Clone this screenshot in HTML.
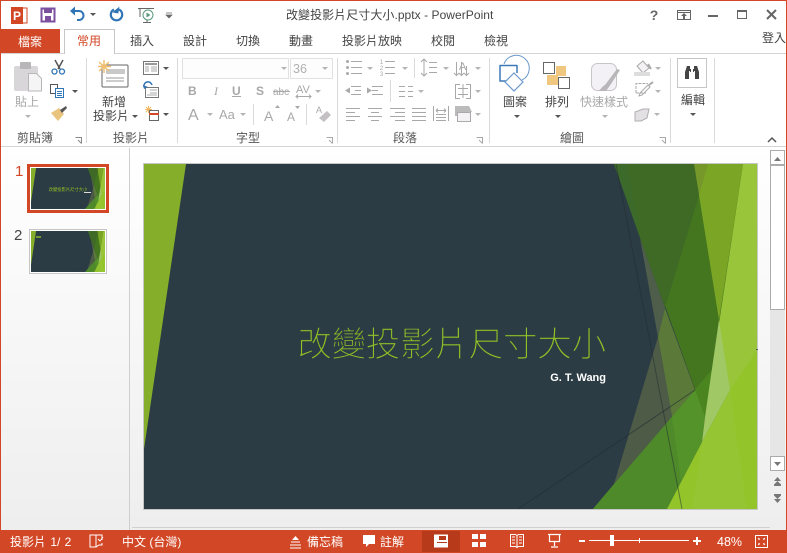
<!DOCTYPE html>
<html><head><meta charset="utf-8"><style>
html,body{margin:0;padding:0;background:#fff;width:787px;height:553px;overflow:hidden}
svg{display:block}
text{font-family:"Liberation Sans","Noto Sans CJK TC",sans-serif;font-size:12px;fill:#444}
.m{text-anchor:middle}
.g{fill:#a8a8a8}
.w{fill:#fff}
.ic{fill:none;stroke:#a8a8a8;stroke-width:1}
</style></head><body>
<svg width="787" height="553" viewBox="0 0 787 553" xmlns="http://www.w3.org/2000/svg">
<defs>
<linearGradient id="bg" x1="0" y1="0" x2="0" y2="1"><stop offset="0" stop-color="#fff"/><stop offset="1" stop-color="#eee"/></linearGradient>
<path id="c" d="M0 0h6l-3 3z" fill="#b5b5b5"/>
<path id="d" d="M0 0h6l-3 3z" fill="#555"/>
<clipPath id="sc"><rect x="144" y="164" width="613" height="345"/></clipPath>
<g id="art" clip-path="url(#sc)">
<rect x="144" y="164" width="613" height="345" fill="#2c3c44"/>
<polygon points="144,164 186,164 144,449" fill="#85ae2a"/>
<!-- right light band -->
<polygon points="694,164 757,164 757,509 747,509" fill="#98c53a"/>
<!-- big mid green triangle -->
<polygon points="614,164 743,164 705,417" fill="#43761f"/>
<polygon points="694,164 743,164 719,320" fill="#7ba525"/>
<polygon points="694,164 708,164 699,195" fill="#76982a"/>
<!-- darker wedge -->
<polygon points="627,164 694,164 699,195 665,308 640,238" fill="#3e6a26"/>
<polygon points="614,164 627,164 640,238" fill="#3c6a2a"/>
<!-- grey wedges -->
<polygon points="640,238 665,308 658,337" fill="#4e5e4a"/>
<polygon points="658,337 665,308 695,390 672,417" fill="#5b7a3a"/>
<polygon points="658,337 672,417 614,484" fill="#4d5b47"/>
<!-- mid bright green -->
<polygon points="593,509 712,370 705,417 702,442 667,509" fill="#54932a"/>
<polygon points="695,390 712,370 705,417" fill="#4a8520"/>
<polygon points="593,509 614,484 672,417 685,509" fill="#4f8a2a"/>
<!-- pale band -->
<polygon points="719,320 730,390 702,442 705,417" fill="#a0c864"/>
<!-- bottom right bright -->
<polygon points="757,350 730,390 702,442 667,509 757,509" fill="#93c52b"/>
<polygon points="702,442 730,390 747,509 692,509" fill="#95c532"/>
<path d="M616 164L682 509" stroke="#222c30" stroke-opacity=".5" fill="none"/>
<path d="M518 509L695 390" stroke="#222c30" stroke-opacity=".6" fill="none"/>
</g>
</defs>

<!-- window -->
<rect x="0" y="0" width="787" height="553" fill="#fff"/>
<rect x="0" y="148" width="787" height="382" fill="url(#bg)"/>
<rect x="0" y="146" width="787" height="1" fill="#d4d4d4"/>
<rect x="0" y="53" width="787" height="1" fill="#d4d4d4"/>

<!-- QAT -->
<rect x="14" y="8" width="13" height="15" fill="#fff" stroke="#d24726"/>
<rect x="11" y="7" width="12" height="17" fill="#d24726"/>
<text x="13" y="20" style="font-size:12px;font-weight:bold;fill:#fff">P</text>
<rect x="41.500" y="8.500" width="13" height="13" fill="#fff" stroke="#7c4f9f" stroke-width="2"/>
<rect x="44" y="8" width="8" height="5" fill="#7c4f9f"/><rect x="45" y="16" width="6" height="6" fill="#7c4f9f"/>
<path d="M74 11h5a4.500 4.500 0 0 1 0 9h-2" fill="none" stroke="#2f74b5" stroke-width="2"/><path d="M75 6.500v9l-5-4.500z" fill="#2f74b5"/>
<use href="#d" x="90" y="13"/>
<path d="M114 9.500a5.700 5.700 0 1 0 5 0" fill="none" stroke="#2f74b5" stroke-width="2.200"/><path d="M119 6v7h-6z" fill="#2f74b5" transform="rotate(10 116 9)"/>
<path d="M138 8.500h16M140 9v8M147 20v3M143 22.500h8" fill="none" stroke="#666"/>
<circle cx="148" cy="15" r="5" fill="#fff" stroke="#5a9a7a"/><path d="M146.500 12.500v5l4-2.500z" fill="#5a9a7a"/>
<path d="M166 13h6M166 15h6l-3 3z" fill="#666" stroke="#666" stroke-width=".7"/>

<!-- title -->
<text x="286" y="19" style="font-size:12px;fill:#444;letter-spacing:.05px">改變投影片尺寸大小.pptx - PowerPoint</text>

<!-- window controls -->
<text x="654" y="20" class="m" style="font-size:14px;font-weight:bold;fill:#666">?</text>
<rect x="677.500" y="10.500" width="13" height="9" fill="none" stroke="#666"/><path d="M677 12.500h14" stroke="#666"/><path d="M684 13l-3 3h2v3h2v-3h2z" fill="#666"/>
<rect x="708" y="15" width="10" height="2" fill="#666"/>
<rect x="737.500" y="10.500" width="9" height="8" fill="none" stroke="#666"/><rect x="737" y="10" width="10" height="2" fill="#666"/>
<path d="M767 10l9 9M776 10l-9 9" stroke="#666" stroke-width="2" fill="none"/>

<!-- tabs -->
<rect x="1" y="29" width="59" height="24" fill="#d24726"/>
<text x="30" y="46" class="m w">檔案</text>
<path d="M64.500 54V29.500h50V54" fill="#fff" stroke="#c6c6c6"/><rect x="65" y="52" width="49" height="3" fill="#fff"/>
<text x="89" y="45" class="m" style="fill:#d24726">常用</text>
<text x="142" y="45" class="m">插入</text>
<text x="195" y="45" class="m">設計</text>
<text x="248" y="45" class="m">切換</text>
<text x="301" y="45" class="m">動畫</text>
<text x="372" y="45" class="m">投影片放映</text>
<text x="443" y="45" class="m">校閱</text>
<text x="496" y="45" class="m">檢視</text>
<text x="762" y="42">登入</text>

<!-- group separators -->
<g fill="#dadada">
<rect x="86" y="58" width="1" height="85"/><rect x="177" y="58" width="1" height="85"/><rect x="337" y="58" width="1" height="85"/><rect x="489" y="58" width="1" height="85"/><rect x="670" y="58" width="1" height="85"/><rect x="714" y="58" width="1" height="85"/>
<rect x="414" y="58" width="1" height="20"/><rect x="390" y="80" width="1" height="22"/><rect x="306" y="104" width="1" height="21"/><rect x="253" y="104" width="1" height="21"/>
</g>

<!-- clipboard -->
<rect x="14" y="66" width="24" height="25" rx="2" fill="#d9d6d9"/><rect x="20" y="62" width="11" height="7" rx="1" fill="#b9b6b9"/>
<path d="M28.500 73.500h8l5 5v12.500h-13z" fill="#f6f5f6" stroke="#b9b6b9"/>
<text x="27" y="106" class="m g">貼上</text>
<use href="#c" x="25" y="115"/>
<path d="M55 60l5 9M63 60l-5 9" stroke="#555" stroke-width="1.500" fill="none"/>
<circle cx="54.500" cy="71.500" r="2.500" fill="none" stroke="#2f74b5" stroke-width="1.300"/><circle cx="62" cy="71.500" r="2.500" fill="none" stroke="#2f74b5" stroke-width="1.300"/>
<rect x="50.500" y="84.500" width="7" height="9" fill="#fff" stroke="#555"/><rect x="55.500" y="88.500" width="8" height="9" fill="#fff" stroke="#2f74b5"/><path d="M57 91.500h5M57 93.500h5M57 95.500h5" stroke="#2f74b5"/>
<use href="#d" x="72" y="90"/>
<path d="M51 113l8-5 5 6-6 7z" fill="#e9c47e"/><path d="M60 110l6-4 1 2-5 5z" fill="#555"/>
<text x="35" y="142" class="m" style="fill:#555">剪貼簿</text>
<path d="M75.500 137.500h6v6M78 140l3.500 3.500" fill="none" stroke="#888"/>

<!-- slides -->
<rect x="102" y="65" width="26" height="22" rx="1" fill="#fff" stroke="#666"/><rect x="106" y="69" width="19" height="5" fill="#c9c9c9"/><path d="M106 78h18M106 81h18" stroke="#999"/>
<path d="M99 62l10 9M109 62l-10 9M104 60v13M98 66.500h13" stroke="#f0c070" stroke-width="1.500"/>
<text x="114" y="106" class="m">新增</text>
<text x="93" y="120">投影片</text>
<use href="#d" x="132" y="115"/>
<rect x="143.500" y="61.500" width="15" height="13" fill="#fff" stroke="#777"/><rect x="145" y="63" width="12" height="2" fill="#999"/><path d="M145 67h4M145 69h4M145 71h4M151 67h6M151 69h6M151 71h6" stroke="#aaa"/>
<use href="#d" x="163" y="67"/>
<rect x="145.500" y="87.500" width="13" height="10" fill="#fff" stroke="#777"/><path d="M150 90h7M150 93h7M147 95h10" stroke="#aaa"/><path d="M144 87a4 4 0 0 1 8-2" fill="none" stroke="#2f74b5" stroke-width="1.500"/><path d="M143 85l5 2-4 2z" fill="#2f74b5"/>
<path d="M146 107l5 5M151 107l-5 5M148.500 106v7M145 109.500h7" stroke="#f0b860"/>
<rect x="149.500" y="110.500" width="9" height="10" fill="#fff" stroke="#666"/><rect x="149" y="113" width="10" height="2" fill="#d24726"/>
<use href="#d" x="163" y="113"/>
<text x="131" y="142" class="m" style="fill:#555">投影片</text>

<!-- font -->
<rect x="182.500" y="58.500" width="106" height="20" fill="#fdfdfd" stroke="#e1e1e1"/>
<use href="#c" x="281" y="67"/>
<rect x="290.500" y="58.500" width="42" height="20" fill="#fdfdfd" stroke="#e1e1e1"/>
<text x="293" y="73" style="font-size:12.500px;fill:#b0b0b0">36</text>
<use href="#c" x="322" y="67"/>
<text x="188" y="95" style="font-size:12px;font-weight:bold;fill:#a8a8a8">B</text>
<text x="214" y="95" style="font-size:12px;font-style:italic;fill:#a8a8a8;font-family:'Liberation Serif',serif">I</text>
<text x="232" y="95" style="font-size:12px;font-weight:bold;fill:#a8a8a8">U</text><rect x="232" y="96" width="9" height="1" fill="#a8a8a8"/>
<text x="256" y="95" style="font-size:12px;font-weight:bold;fill:#a8a8a8">S</text>
<text x="273" y="95" style="font-size:10px;fill:#a8a8a8">abc</text><rect x="273" y="91" width="17" height="1" fill="#a8a8a8"/>
<text x="296" y="93" style="font-size:11px;fill:#a8a8a8">AV</text><path d="M296 96.500h15M298 94.500l-2 2 2 2M309 94.500l2 2-2 2" class="ic"/>
<use href="#c" x="315" y="90"/>
<text x="188" y="120" style="font-size:16px;fill:#a8a8a8">A</text>
<use href="#c" x="207" y="113"/>
<text x="219" y="119" style="font-size:13px;fill:#a8a8a8">Aa</text>
<use href="#c" x="240" y="113"/>
<text x="264" y="121" style="font-size:14px;fill:#a8a8a8">A</text><path d="M275 108h5l-2.500-3z" fill="#a8a8a8"/>
<text x="287" y="121" style="font-size:12px;fill:#a8a8a8">A</text><path d="M295 106h5l-2.500 3z" fill="#a8a8a8"/>
<text x="316" y="113" style="font-size:9px;fill:#a8a8a8">A</text>
<path d="M319 118l8-7 4 4-7 7z" fill="#c4c0c4"/>
<text x="248" y="142" class="m" style="fill:#555">字型</text>
<path d="M326.500 137.500h6v6M329 140l3.500 3.500" fill="none" stroke="#a8a8a8"/>

<!-- paragraph -->
<g class="ic">
<path d="M351 61.500h11M351 67.500h11M351 73.500h11M385 61.500h10M385 67.500h10M385 73.500h10"/>
<path d="M424 60v15M421 62l3-3 3 3M421 73l3 3 3-3M429 62.500h8M429 67.500h8M429 72.500h8"/>
<path d="M456.500 62v13M461.500 62v13M466.500 66v9M454 73l2.500 2.500 2.500-2.500M459 73l2.500 2.500 2.500-2.500M464 73l2.500 2.500 2.500-2.500"/>
<path d="M351 86.500h10M355 90.500h6M351 94.500h10M372 86.500h11M372 90.500h6M372 94.500h11"/>
<path d="M399 86.500h6M399 91.500h6M399 96.500h6M408 86.500h5M408 91.500h5M408 96.500h5"/>
<path d="M460 84.500h-4.500v14h4.500M466 84.500h4.500v14h-4.500M458 88.500h10M458 94.500h10M463 84v8M463 92v6"/>
<path d="M346 108.500h14M346 112.500h9M346 116.500h14M346 120.500h9"/>
<path d="M368 108.500h14M371 112.500h8M368 116.500h14M371 120.500h8"/>
<path d="M390 108.500h15M395 112.500h10M390 116.500h15M395 120.500h10"/>
<path d="M412 108.500h14M412 112.500h14M412 116.500h14M412 120.500h14"/>
<path d="M433.500 106v15M448.500 106v15M436 110.500h10M436 114.500h10M436 117.500h10M436 120.500h10M436 110.500l2-2M436 110.500l2 2M446 110.500l-2-2M446 110.500l-2 2"/>
</g>
<g fill="#aaa"><circle cx="347.500" cy="61.500" r="1.500"/><circle cx="347.500" cy="67.500" r="1.500"/><circle cx="347.500" cy="73.500" r="1.500"/></g>
<text x="381.500" y="64" class="m" style="font-size:6px;fill:#a8a8a8">1</text><text x="381.500" y="70" class="m" style="font-size:6px;fill:#a8a8a8">2</text><text x="381.500" y="76" class="m" style="font-size:6px;fill:#a8a8a8">3</text>
<text x="459" y="70" style="font-size:11px;fill:#a8a8a8">A</text>
<use href="#c" x="367" y="67"/><use href="#c" x="402" y="67"/><use href="#c" x="443" y="67"/><use href="#c" x="475" y="67"/>
<use href="#c" x="418" y="90"/><use href="#c" x="475" y="90"/><use href="#c" x="475" y="113"/>
<path d="M345 90.500l5-3v6z" fill="#aaa"/><path d="M372 90.500l-5-3v6z" fill="#aaa"/>
<path d="M455 106h14l3 6h-7l-4 4h-6z" fill="#bbb"/>
<rect x="457.500" y="112.500" width="13" height="9" fill="#f4f2f4" stroke="#aaa"/>
<text x="405" y="142" class="m" style="fill:#555">段落</text>
<path d="M476.500 137.500h6v6M479 140l3.500 3.500" fill="none" stroke="#a8a8a8"/>

<!-- drawing -->
<path d="M504 64a13 13 0 1 1 18 16" fill="none" stroke="#6a99cb" stroke-width="1"/>
<path d="M500 65.500h17M500 65v16h7" fill="none" stroke="#3f7ab8" stroke-width="1.500"/>
<path d="M517 65v8" stroke="#3f7ab8" stroke-width="1.500"/>
<path d="M514 73l9 9-9 9-9-9z" fill="#fff" stroke="#6a99cb" stroke-width="1.200"/>
<text x="515" y="106" class="m">圖案</text>
<use href="#d" x="514" y="115"/>
<rect x="556" y="66" width="10" height="10" fill="#efc77f"/><rect x="547" y="75" width="11" height="10" fill="#efc77f"/>
<rect x="543.500" y="62.500" width="11" height="11" fill="#fff" stroke="#666"/><rect x="558.500" y="77.500" width="11" height="11" fill="#fff" stroke="#666"/>
<text x="557" y="106" class="m">排列</text>
<use href="#d" x="555" y="115"/>
<rect x="591.500" y="63.500" width="25" height="27" rx="6" fill="#f3f1f5" stroke="#c8c5c9"/>
<path d="M620 70l-9 14-5 7h-8c3-1 4-5 7-6l12-16z" fill="#b9b6b9"/>
<text x="604" y="106" class="m g">快速樣式</text>
<use href="#c" x="602" y="115"/>
<path d="M637 66l6-5 6 7-6 5z" fill="#f3f1f5" stroke="#aaa"/><rect x="634" y="72" width="16" height="4" fill="#ddd"/>
<path d="M648 64l3 5" stroke="#aaa" stroke-width="2"/>
<use href="#c" x="655" y="67"/>
<path d="M636 93v-9.500h12M636 93h10" class="ic" stroke-dasharray="3 1"/>
<path d="M640 93l8-8 2 2-8 8-3 1z" class="ic"/><path d="M649 85l4-3" stroke="#aaa" stroke-width="2"/>
<use href="#c" x="655" y="90"/>
<path d="M635 112l8-3h6l-2 9-6 3h-6z" fill="#e3e0e3" stroke="#b0adb0"/>
<use href="#c" x="654" y="113"/>
<text x="572" y="142" class="m" style="fill:#555">繪圖</text>
<path d="M659.500 137.500h6v6M662 140l3.500 3.500" fill="none" stroke="#a8a8a8"/>

<!-- editing -->
<rect x="677.500" y="58.500" width="29" height="29" fill="#fff" stroke="#c6c6c6"/>
<path d="M687 66h3v3h1v3h-1v-1h-1v8h-4v-3zM697 66h-3v3h-1v3h1v-1h1v8h4v-3z" fill="#444"/>
<path d="M687 66l-2 6v7h4V67zM697 66l2 6v7h-4V67z" fill="#444"/>
<text x="693" y="104" class="m">編輯</text>
<use href="#d" x="690" y="113"/>
<path d="M768 142l4-4 4 4" fill="none" stroke="#555" stroke-width="1.500"/>

<!-- thumbs panel -->
<rect x="129" y="148" width="1" height="382" fill="#cfcfcf"/>
<text x="15" y="176" style="font-size:15px;fill:#d24726">1</text>
<text x="14" y="240" style="font-size:15px;fill:#444">2</text>
<rect x="28.500" y="165.500" width="79" height="46" fill="#fff" stroke="#d24726" stroke-width="3"/>
<g transform="translate(31 168) scale(.1207 .1188) translate(-144 -164)"><use href="#art"/></g>
<text x="68" y="191" class="m" style="font-size:4.300px;fill:#90c226">改變投影片尺寸大小</text>
<rect x="84" y="192" width="7" height="1" fill="#ddd"/>
<rect x="29.500" y="229.500" width="77" height="44" fill="#fff" stroke="#c6c6c6"/>
<g transform="translate(31 231) scale(.1207 .1188) translate(-144 -164)"><use href="#art"/></g>
<rect x="36" y="236" width="5" height="2" fill="#6f9a2e"/>

<!-- main slide -->
<rect x="143.500" y="163.500" width="614" height="346" fill="none" stroke="#c6c6c6"/>
<use href="#art"/>
<text x="606" y="356" text-anchor="end" style="font-size:34.300px;font-weight:300;fill:#90c226;stroke:#2c3c44;stroke-width:.5px;font-family:'Noto Sans CJK TC',sans-serif">改變投影片尺寸大小</text>
<text x="606" y="381" text-anchor="end" style="font-size:11px;font-weight:bold;fill:#fff">G. T. Wang</text>
<rect x="756" y="349" width="2" height="1" fill="#555"/>
<rect x="132" y="527" width="638" height="1" fill="#d0d0d0"/>

<!-- scrollbar -->
<rect x="770" y="150" width="15" height="306" fill="#e6e6e6"/>
<rect x="770.500" y="150.500" width="14" height="14" fill="#fff" stroke="#ababab"/>
<path d="M774 161h7l-3.500-4z" fill="#777"/>
<rect x="770.500" y="165.500" width="14" height="144" fill="#fff" stroke="#ababab"/>
<rect x="770.500" y="456.500" width="14" height="14" fill="#fff" stroke="#ababab"/>
<path d="M774 462h7l-3.500 4z" fill="#777"/>
<path d="M774 481h7l-3.500-4zM774 486h7v-1.500h-7zM774 484.500h7l-3.500-3.500z" fill="#777"/>
<path d="M774 494h7v1.500h-7zM774 495.500h7l-3.500 3.500zM774 499h7l-3.500 4z" fill="#777"/>

<!-- status bar -->
<rect x="0" y="530" width="787" height="23" fill="#d24726"/>
<text x="10" y="546" class="w" style="word-spacing:1px">投影片 1/ 2</text>
<path d="M90 535h6v12h-6zM96 535h6v5M96 547l3-2h3v-2" fill="none" stroke="#fff"/><path d="M98 539l2 2 3-4" fill="none" stroke="#fff"/>
<text x="122" y="546" class="w">中文 (台灣)</text>
<path d="M291 542h9M290 545h11M290 548h11" stroke="#fff"/><path d="M292 540l3.500-4 3.500 4z" fill="#fff"/>
<text x="307" y="546" class="w">備忘稿</text>
<path d="M363 535h12v9h-6l-3 3v-3h-3z" fill="#fff"/>
<text x="380" y="546" class="w">註解</text>
<rect x="422" y="531" width="38" height="21" fill="#b73a1b"/>
<path d="M434 534.500h14v13h-14z" fill="#fff"/><rect x="439" y="536" width="7" height="4" fill="#b73a1b"/><rect x="437" y="542" width="10" height="1" fill="#b73a1b"/>
<g fill="#fff"><rect x="472" y="534" width="6" height="5"/><rect x="480" y="534" width="6" height="5"/><rect x="472" y="542" width="6" height="5"/><rect x="480" y="542" width="6" height="5"/></g>
<path d="M510.500 534.500h5l1.500 1 1.500-1h5v12h-5l-1.500 1-1.500-1h-5zM517 536v11M512 537h3M512 540h3M512 543h3M519 537h3M519 540h3M519 543h3" fill="none" stroke="#fff"/>
<path d="M548 534.500h13M549.500 535v6.500h10v-6.500M554.500 542v4M551 547h7" fill="none" stroke="#fff" stroke-width="1.200"/>
<rect x="579" y="540" width="6" height="2" fill="#fff"/>
<rect x="589" y="540" width="100" height="1" fill="#fff"/>
<rect x="610" y="535" width="4" height="11" fill="#fff"/>
<rect x="639" y="538" width="1" height="5" fill="#fff"/>
<path d="M693 540h8v2h-8zM696 537h2v8h-2z" fill="#fff"/>
<text x="717" y="546" class="w" style="font-size:12.500px">48%</text>
<rect x="755.500" y="535.500" width="12" height="12" fill="none" stroke="#fff"/>
<path d="M758 538l2 1-1 1zM765 538l-2 1 1 1zM758 545l2-1-1-1zM765 545l-2-1 1-1z" fill="#fff" stroke="#fff" stroke-width=".5"/>

<!-- window border -->
<rect x="0" y="0" width="787" height="1" fill="#d24726"/>
<rect x="0" y="0" width="1" height="553" fill="#d24726"/>
<rect x="786" y="0" width="1" height="553" fill="#d24726"/>
</svg>
</body></html>
